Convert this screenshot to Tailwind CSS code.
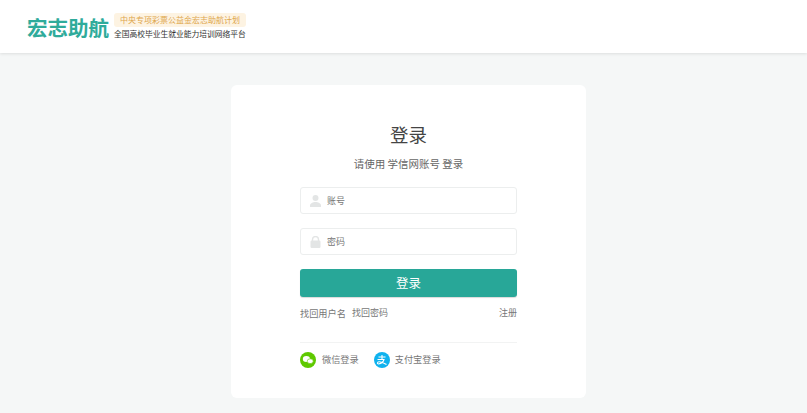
<!DOCTYPE html>
<html lang="zh-CN">
<head>
  <meta charset="UTF-8" />
  <title>登录 - 宏志助航</title>
  <script src="https://cdn.jsdelivr.net/npm/@tailwindcss/browser@4"></script>
</head>
<body class="bg-[#f5f7f7] h-[413px] overflow-hidden font-['Noto_Sans_CJK_SC',sans-serif]">
  <!-- 顶部 -->
  <header class="h-[53px] bg-white shadow-[0_1px_3px_rgba(0,0,0,0.1)] flex items-center pl-[27px]">
    <div class="w-[82px] text-[20.5px] leading-none font-bold text-[#2fab9b] whitespace-nowrap mt-[2px]">宏志助航</div>
    <div class="ml-[5px] flex flex-col items-start mt-[-1px]">
      <div class="h-[14px] w-[132px] bg-[#fdf3e2] rounded-[3px] text-[8px] leading-[14px] text-[#dda64b] text-center whitespace-nowrap">中央专项彩票公益金宏志助航计划</div>
      <div class="text-[7.75px] leading-[13px] text-[#333] whitespace-nowrap">全国高校毕业生就业能力培训网络平台</div>
    </div>
  </header>

  <!-- 登录卡片 -->
  <main class="w-[355px] h-[313px] ml-[231px] mt-[32px] bg-white rounded-[6px] px-[69px] flex flex-col">
    <h1 class="mt-[35px] text-[18.5px] leading-[28px] text-[#444] text-center">登录</h1>
    <p class="mt-[8px] text-[10.5px] leading-[16px] text-[#666] text-center">请使用 学信网账号 登录</p>

    <div class="mt-[15px] h-[27px] border border-[#eceeee] rounded-[3px] flex items-center pl-[9px]">
      <svg class="w-[11px] h-[12px]" viewBox="0 0 11 12"><circle cx="5.5" cy="3" r="3" fill="#e3e5e5"/><path d="M0 12V10.5C0 8.5 3 7 5.5 7S11 8.5 11 10.5V12Z" fill="#e3e5e5"/></svg>
      <span class="ml-[6px] text-[9px] text-[#777]">账号</span>
    </div>
    <div class="mt-[14px] h-[27px] border border-[#eceeee] rounded-[3px] flex items-center pl-[9px]">
      <svg class="w-[11px] h-[12px]" viewBox="0 0 11 12"><path d="M2.5 5V3.5a3 3 0 0 1 6 0V5" fill="none" stroke="#e3e5e5" stroke-width="1.4"/><rect x="0.5" y="4.5" width="10" height="7.5" rx="1.2" fill="#e3e5e5"/></svg>
      <span class="ml-[6px] text-[9px] text-[#777]">密码</span>
    </div>

    <button class="mt-[14px] h-[28px] bg-[#28a798] rounded-[3px] text-white text-[12.5px] shadow-[0_1px_1px_rgba(0,0,0,0.15)]">登录</button>

    <div class="mt-[9px] flex justify-between text-[9px] leading-[14px] text-[#777]">
      <div class="flex gap-[6px]"><a class="text-[9.2px]">找回用户名</a><a>找回密码</a></div>
      <a>注册</a>
    </div>

    <div class="mt-[22px] pt-[9px] border-t border-[#f2f3f3] flex items-center text-[9.2px] text-[#777]">
      <svg class="w-[16px] h-[16px]" viewBox="0 0 16 16"><circle cx="8" cy="8" r="8" fill="#5fc900"/><ellipse cx="6.4" cy="7" rx="3.6" ry="3" fill="#fff"/><ellipse cx="10.2" cy="9.2" rx="3" ry="2.4" fill="#fff" stroke="#5fc900" stroke-width="0.6"/></svg>
      <span class="ml-[6px]">微信登录</span>
      <svg class="ml-[15px] w-[16px] h-[16px]" viewBox="0 0 16 16"><circle cx="8" cy="8" r="8" fill="#0fb2ee"/><path d="M4.5 5H11.5M8 3V7M3.5 7.5H10C9.4 9.8 7 11.5 4.5 12C3 12 3 10 5 9.8C7.5 9.6 10 11 12.5 12.5" fill="none" stroke="#fff" stroke-width="1.1"/></svg>
      <span class="ml-[5px]">支付宝登录</span>
    </div>
  </main>
</body>
</html>
